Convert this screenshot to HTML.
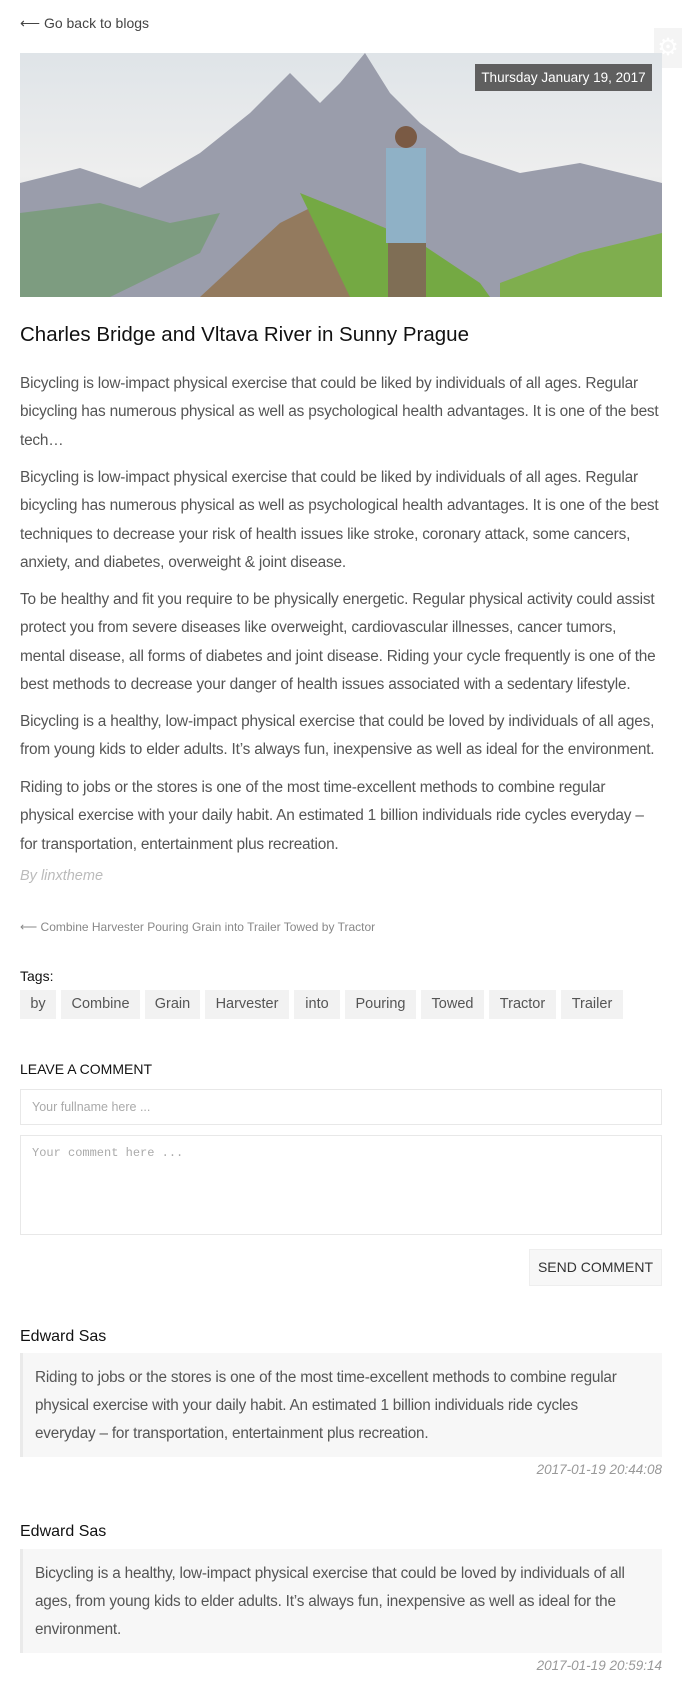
<!DOCTYPE html>
<html><head><meta charset="utf-8"><style>
*{margin:0;padding:0;box-sizing:border-box}
body{width:682px;height:1691px;background:#fff;font-family:"Liberation Sans",sans-serif;color:#555;position:relative;overflow:hidden}
.a{position:absolute;white-space:nowrap}
.p{position:absolute;left:20px;font-size:15.4px;line-height:28.3px;color:#555;white-space:nowrap;letter-spacing:-0.2px}
.tag{position:absolute;top:990px;height:29px;background:#f2f2f2;font-size:14.5px;line-height:29px;color:#555;text-align:center}
.box{position:absolute;left:20px;width:642px;background:#f7f7f7;border-left:3px solid #eaeaea;padding:11px 0 0 12px;font-size:15.3px;line-height:28px;white-space:nowrap;letter-spacing:-0.2px}
.name{position:absolute;left:20px;font-size:16px;color:#111}
.dt{position:absolute;right:20px;font-size:13.5px;font-style:italic;color:#999}
</style></head><body>
<div class="a" style="left:20px;top:15px;font-size:14px;color:#444">&#x27f5; Go back to blogs</div>
<div class="a" style="left:654px;top:28px;width:28px;height:40px;background:#f4f4f4;color:#fff;font-size:24px;line-height:40px;text-align:center">&#9881;</div>
<svg class="a" style="left:20px;top:53px" width="642" height="244" viewBox="0 0 642 244">
<defs><linearGradient id="s" x1="0" y1="0" x2="0" y2="1"><stop offset="0" stop-color="#dfe4e8"/><stop offset="0.5" stop-color="#eeeeee"/><stop offset="1" stop-color="#c9d1d6"/></linearGradient></defs>
<rect width="642" height="244" fill="url(#s)"/>
<path d="M0 130 L60 115 L120 135 L180 100 L230 60 L270 20 L300 50 L320 30 L345 0 L370 40 L400 70 L440 100 L500 120 L560 110 L642 130 L642 244 L0 244Z" fill="#9a9dab"/>
<path d="M0 160 L80 150 L150 170 L200 160 L180 200 L90 244 L0 244Z" fill="#7d9c80"/>
<path d="M180 244 L260 170 L300 150 L340 200 L380 244Z" fill="#937a5e"/>
<path d="M280 140 L330 160 L400 190 L460 230 L470 244 L330 244Z" fill="#74a943"/>
<path d="M480 230 L560 200 L642 180 L642 244 L480 244Z" fill="#7fae4e"/>
<rect x="366" y="95" width="40" height="95" fill="#8fb1c6"/>
<circle cx="386" cy="84" r="11" fill="#7a5a44"/>
<rect x="368" y="190" width="38" height="54" fill="#7f6e55"/>
</svg>
<div class="a" style="left:475px;top:64px;width:177px;height:27px;background:#5f5f5f;color:#fff;font-size:13.5px;line-height:27px;text-align:center">Thursday January 19, 2017</div>
<div class="a" style="left:20px;top:323px;font-size:20.5px;color:#111">Charles Bridge and Vltava River in Sunny Prague</div>
<div class="p" style="top:370px">Bicycling is low-impact physical exercise that could be liked by individuals of all ages. Regular<br>bicycling has numerous physical as well as psychological health advantages. It is one of the best<br>tech…</div>
<div class="p" style="top:464px">Bicycling is low-impact physical exercise that could be liked by individuals of all ages. Regular<br>bicycling has numerous physical as well as psychological health advantages. It is one of the best<br>techniques to decrease your risk of health issues like stroke, coronary attack, some cancers,<br>anxiety, and diabetes, overweight &amp; joint disease.</div>
<div class="p" style="top:586px">To be healthy and fit you require to be physically energetic. Regular physical activity could assist<br>protect you from severe diseases like overweight, cardiovascular illnesses, cancer tumors,<br>mental disease, all forms of diabetes and joint disease. Riding your cycle frequently is one of the<br>best methods to decrease your danger of health issues associated with a sedentary lifestyle.</div>
<div class="p" style="top:708px">Bicycling is a healthy, low-impact physical exercise that could be loved by individuals of all ages,<br>from young kids to elder adults. It’s always fun, inexpensive as well as ideal for the environment.</div>
<div class="p" style="top:774px">Riding to jobs or the stores is one of the most time-excellent methods to combine regular<br>physical exercise with your daily habit. An estimated 1 billion individuals ride cycles everyday –<br>for transportation, entertainment plus recreation.</div>
<div class="a" style="left:20px;top:868px;font-size:14.5px;font-style:italic;color:#bbb">By linxtheme</div>
<div class="a" style="left:20px;top:920px;font-size:12px;color:#888">&#x27f5; Combine Harvester Pouring Grain into Trailer Towed by Tractor</div>
<div class="a" style="left:20px;top:968px;font-size:14px;color:#111">Tags:</div>
<div class="tag" style="left:20px;width:36px">by</div>
<div class="tag" style="left:61px;width:79px">Combine</div>
<div class="tag" style="left:145px;width:55px">Grain</div>
<div class="tag" style="left:205px;width:84px">Harvester</div>
<div class="tag" style="left:294px;width:46px">into</div>
<div class="tag" style="left:345px;width:71px">Pouring</div>
<div class="tag" style="left:421px;width:63px">Towed</div>
<div class="tag" style="left:489px;width:67px">Tractor</div>
<div class="tag" style="left:561px;width:62px">Trailer</div>
<div class="a" style="left:20px;top:1061px;font-size:14px;color:#111">LEAVE A COMMENT</div>
<div class="a" style="left:20px;top:1089px;width:642px;height:36px;border:1px solid #e8e8e8;padding-left:11px;font-size:12.5px;line-height:34px;color:#aaa">Your fullname here ...</div>
<div class="a" style="left:20px;top:1135px;width:642px;height:100px;border:1px solid #e8e8e8;padding:10px 11px;font-family:'Liberation Mono',monospace;font-size:12px;color:#aaa">Your comment here ...</div>
<div class="a" style="left:529px;top:1249px;width:133px;height:37px;background:#f7f7f7;border:1px solid #eee;font-size:14px;line-height:35px;text-align:center;color:#333">SEND COMMENT</div>
<div class="name" style="top:1328px">Edward Sas</div>
<div class="box" style="top:1353px;height:104px">Riding to jobs or the stores is one of the most time-excellent methods to combine regular<br>physical exercise with your daily habit. An estimated 1 billion individuals ride cycles<br>everyday – for transportation, entertainment plus recreation.</div>
<div class="dt" style="top:1462px">2017-01-19 20:44:08</div>
<div class="name" style="top:1523px">Edward Sas</div>
<div class="box" style="top:1549px;height:104px">Bicycling is a healthy, low-impact physical exercise that could be loved by individuals of all<br>ages, from young kids to elder adults. It’s always fun, inexpensive as well as ideal for the<br>environment.</div>
<div class="dt" style="top:1658px">2017-01-19 20:59:14</div>
</body></html>
